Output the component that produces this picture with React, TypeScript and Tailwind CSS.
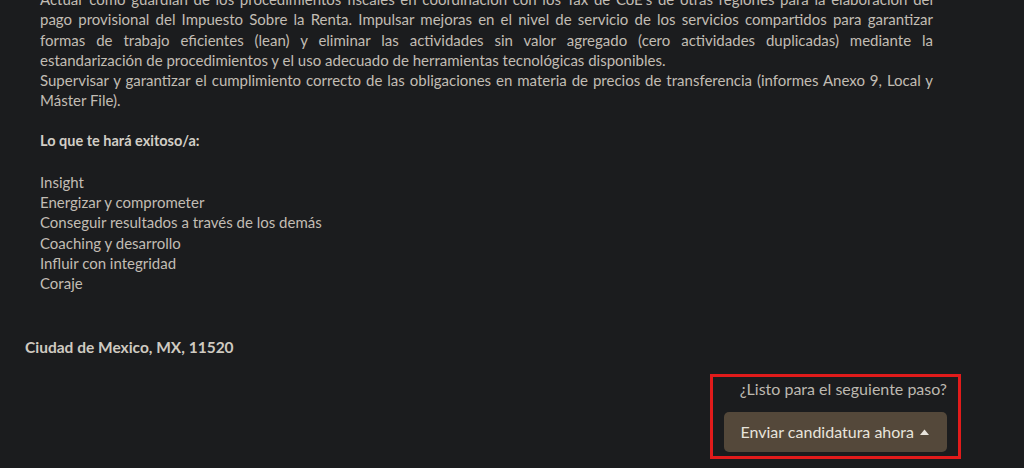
const para1 = [
  "Actuar como guardián de los procedimientos fiscales en coordinación con los Tax de CoE's de otras regiones para la elaboración del",
  'pago provisional del Impuesto Sobre la Renta. Impulsar mejoras en el nivel de servicio de los servicios compartidos para garantizar',
  'formas de trabajo eficientes (lean) y eliminar las actividades sin valor agregado (cero actividades duplicadas) mediante la',
]

const skills = [
  'Insight',
  'Energizar y comprometer',
  'Conseguir resultados a través de los demás',
  'Coaching y desarrollo',
  'Influir con integridad',
  'Coraje',
]

export default function App() {
  return (
    <div
      className="h-[468px] w-[1024px] overflow-hidden bg-[#1b1c1e] text-[#c2bdb4]"
      style={{ fontFamily: 'Lato, "Open Sans", sans-serif' }}
    >
      {/* Job description */}
      <div className="-mt-[11px] ml-[40px] w-[893px] whitespace-nowrap text-[15px] leading-[20.3px]">
        {para1.map((line) => (
          <div key={line} className="text-justify [text-align-last:justify]">
            {line}
          </div>
        ))}
        <div>estandarización de procedimientos y el uso adecuado de herramientas tecnológicas disponibles.</div>
        <div className="text-justify [text-align-last:justify]">
          Supervisar y garantizar el cumplimiento correcto de las obligaciones en materia de precios de transferencia (informes Anexo 9, Local y
        </div>
        <div>Máster File).</div>
        <br />
        <p className="text-[14.5px] font-bold text-[#d2cec6]">Lo que te hará exitoso/a:</p>
        <br />
        <ul>
          {skills.map((s) => (
            <li key={s}>{s}</li>
          ))}
        </ul>
      </div>

      {/* Location */}
      <p className="ml-[25px] mt-[43px] text-[15.5px] font-bold text-[#cfcac1]">Ciudad de Mexico, MX, 11520</p>

      {/* Apply */}
      <div className="mr-[63px] mt-[14px] flex justify-end">
        <div className="flex flex-col items-end border-[3px] border-[#e11b1b] pb-[4px] pl-[11px] pr-[11px] pt-[1px]">
          <p className="text-[16px] leading-[22px] text-[#bdb8b0]">¿Listo para el seguiente paso?</p>
          <button className="mt-[12px] flex h-[40px] items-center gap-[6px] rounded-[5px] bg-[#54483a] pl-[16px] pr-[18px] text-[16px] text-[#e8e4dc]">
            Enviar candidatura ahora
            <svg width="9" height="6" viewBox="0 0 9 6" className="mt-[1px]">
              <path d="M0 6 L4.5 0.5 L9 6 Z" fill="#e8e4dc" />
            </svg>
          </button>
        </div>
      </div>
    </div>
  )
}
